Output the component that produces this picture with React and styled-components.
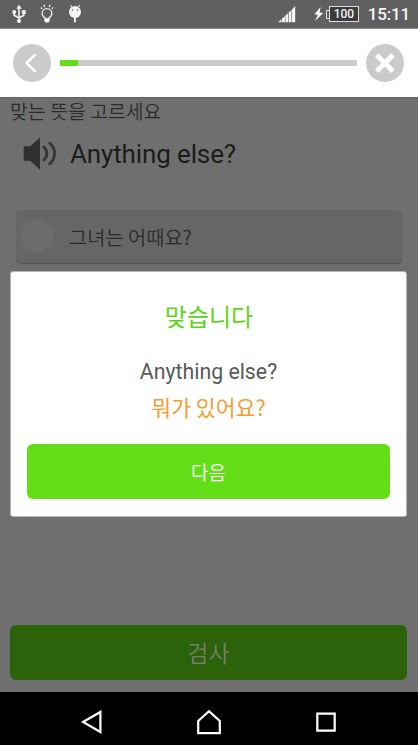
import React from "react";
import styled, { createGlobalStyle } from "styled-components";

const App = () => {
  return (
    <Phone>
      <GlobalStyle />
      <StatusBar>
        <StatusGroup>
          <svg width="14" height="20" viewBox="0 0 14 20" fill="none" stroke="#f2f2f2" strokeWidth="1.6">
            <path d="M7 3v15M2.2 7v4.2L7 14M11.8 7v4.2L7 14" />
            <path d="M7 .8l2.8 4H4.2z" fill="#f2f2f2" stroke="none" />
            <circle cx="7" cy="17" r="2.1" fill="#f2f2f2" stroke="none" />
            <circle cx="2.2" cy="8" r="2" fill="#f2f2f2" stroke="none" />
            <path d="M9.9 6.2h3.8V10H9.9z" fill="#f2f2f2" stroke="none" />
          </svg>
          <svg width="14" height="20" viewBox="0 0 14 20" fill="none" stroke="#e6e6e6" strokeWidth="1.4">
            <path d="M5 15.2v-1.6C3.3 12.8 2.2 11.3 2.2 9.4a4.8 4.8 0 0 1 9.6 0c0 1.9-1.1 3.4-2.8 4.2v1.6" />
            <path d="M4.4 14.2h5.2v2.4L8.5 18.4h-3l-1.1-1.8z" fill="#fff" stroke="none" />
            <path d="M4.7 3L4 .8M9.3 3l.7-2.2M2.1 4.8L.8 3.6M11.9 4.8l1.3-1.2" />
          </svg>
          <svg width="14" height="20" viewBox="0 0 14 20" fill="none">
            <path d="M3.6 3L2.4 1M10.4 3l1.2-2" stroke="#f5f5f5" strokeWidth="1.1" />
            <path d="M7 13v5.3" stroke="#f5f5f5" strokeWidth="1.8" />
            <circle cx="7" cy="7.9" r="6" fill="#f5f5f5" />
            <circle cx="4.4" cy="6" r=".8" fill="#606060" />
            <circle cx="9.6" cy="6" r=".8" fill="#606060" />
          </svg>
        </StatusGroup>
        <StatusGroup $right>
          <svg width="18" height="18" viewBox="0 0 18 18" fill="#f5f5f5">
            <path d="M0 17.3l3.4-3v3zM4 13.8l2.9-2.7v6.2H4zM7.4 10.6l2.7-2.4v9.1H7.4zM10.7 7.6l2.7-2.5v12.2h-2.7zM14 4.5L17.2 1v16.3H14z" />
          </svg>
          <Charge>
            <svg width="10" height="14" viewBox="0 0 10 14" fill="#f5f5f5">
              <path d="M6.6 0L.4 7.2l3.4.5L1.2 14l8-8.1-3.6-.4z" />
            </svg>
            <BatteryTip />
            <Battery>100</Battery>
          </Charge>
          <Clock>15:11</Clock>
        </StatusGroup>
      </StatusBar>

      <Header>
        <RoundButton aria-label="back">
          <svg width="38" height="38" viewBox="0 0 38 38" fill="none" stroke="#fff" strokeWidth="2.4">
            <path d="M22.7 10.2L13.6 19l9.1 9" />
          </svg>
        </RoundButton>
        <Progress>
          <Bar />
        </Progress>
        <RoundButton aria-label="close">
          <svg width="38" height="38" viewBox="0 0 38 38" fill="none" stroke="#fff" strokeWidth="5">
            <path d="M10.7 11L27 27.2M27 11L10.7 27.2" />
          </svg>
        </RoundButton>
      </Header>

      <Content>
        <Guide>맞는 뜻을 고르세요</Guide>
        <Question>
          <svg width="34" height="34" viewBox="0 0 34 34" fill="none" stroke="#363636" strokeWidth="2.8" strokeLinecap="round">
            <path d="M.7 9.3h6.6L17 .3v32.4l-9.7-9H.7z" fill="#303030" stroke="none" />
            <path d="M20.7 10c4.2 3.2 4.2 9.8 0 13" />
            <path d="M26.7 6.2c6.4 5.2 6.4 15.4 0 20.6" />
          </svg>
          <span>Anything else?</span>
        </Question>
        <Option>
          <Radio />
          <span>그녀는 어때요?</span>
        </Option>
        <CheckButton>검사</CheckButton>

        <Dialog>
          <Result>맞습니다</Result>
          <Sentence>Anything else?</Sentence>
          <Meaning>뭐가 있어요?</Meaning>
          <NextButton>다음</NextButton>
        </Dialog>
      </Content>

      <NavBar>
        <svg width="22" height="24" viewBox="0 0 22 24">
          <path d="M2 12L19.4 2v20z" />
        </svg>
        <svg width="26" height="26" viewBox="0 0 26 26">
          <path d="M2.2 24.2V12L13 2.2 23.8 12v12.2z" />
        </svg>
        <svg width="22" height="22" viewBox="0 0 22 22">
          <path d="M2.3 2.7h17.4v17H2.3z" />
        </svg>
      </NavBar>
    </Phone>
  );
};

export default App;

const GlobalStyle = createGlobalStyle`
  * {
    box-sizing: border-box;
  }

  body {
    margin: 0;
    background: #000;
  }

  button {
    padding: 0;
    border: none;
    font-family: inherit;
  }

  svg {
    display: block;
    flex-shrink: 0;
  }
`;

const Phone = styled.div`
  display: flex;
  flex-direction: column;
  width: 418px;
  height: 745px;
  overflow: hidden;
  font-family: Roboto, "Noto Sans CJK KR", sans-serif;
`;

const StatusBar = styled.div`
  display: flex;
  justify-content: space-between;
  height: 28px;
  padding: 0 8px 0 12px;
  background: #606060;
`;

const StatusGroup = styled.div`
  display: flex;
  align-items: center;
  gap: ${(props) => (props.$right ? "0" : "14px")};
`;

const Charge = styled.div`
  display: flex;
  align-items: center;
  margin: 0 9px 0 18px;
`;

const BatteryTip = styled.div`
  width: 3px;
  height: 9px;
  margin-left: 2px;
  border: 1px solid #ddd;
  border-right: none;
`;

const Battery = styled.div`
  width: 30px;
  height: 16px;
  border: 1px solid #ddd;
  background: #3c3c3c;
  color: #f5f5f5;
  font-size: 12px;
  font-weight: 500;
  line-height: 15px;
  text-align: center;
`;

const Clock = styled.div`
  color: #f5f5f5;
  font-size: 17px;
  font-weight: 500;
  line-height: 28px;
  letter-spacing: -0.2px;
`;

const Header = styled.div`
  display: flex;
  align-items: center;
  justify-content: space-between;
  height: 69px;
  padding: 0 14px 0 13px;
  background: #fff;
  border-top: 1px solid #8a8a8a;
`;

const RoundButton = styled.button`
  width: 38px;
  height: 38px;
  border-radius: 50%;
  background: #cbcbcb;
`;

const Progress = styled.div`
  width: 297px;
  height: 6px;
  background: #cbcbcb;
`;

const Bar = styled.div`
  width: 18px;
  height: 100%;
  background: #64df17;
`;

const Content = styled.div`
  position: relative;
  display: flex;
  flex-direction: column;
  height: 595px;
  padding: 0 11px 12px 10px;
  background: #6f6f6f;
  border-top: 1px solid #626262;
`;

const Guide = styled.div`
  height: 28px;
  color: #2b2b2b;
  font-size: 19.3px;
  font-weight: 350;
  line-height: 30px;
`;

const Question = styled.div`
  display: flex;
  align-items: center;
  gap: 13px;
  height: 56px;
  padding-left: 13px;
  color: #1c1c1c;
  font-size: 26px;
  letter-spacing: -0.13px;
`;

const Option = styled.div`
  display: flex;
  align-items: center;
  gap: 16px;
  width: 386px;
  height: 53px;
  margin: 28px 0 0 6px;
  padding-left: 5px;
  border-radius: 5px;
  background: #666;
  box-shadow: 0 1px 1px #505050;
  color: #2b2b2b;
  font-family: "Noto Sans CJK KR", sans-serif;
  font-size: 19.8px;
  font-weight: 350;
`;

const Radio = styled.div`
  width: 32px;
  height: 32px;
  margin-top: -2px;
  border-radius: 50%;
  background: #6d6d6d;
`;

const CheckButton = styled.button`
  height: 55px;
  margin-top: auto;
  padding-bottom: 2px;
  border-radius: 6px;
  background: #2c620a;
  color: #72806a;
  font-size: 23px;
  font-weight: 350;
`;

const Dialog = styled.div`
  position: absolute;
  top: 173px;
  left: 10px;
  display: flex;
  flex-direction: column;
  align-items: center;
  width: 397px;
  height: 246px;
  padding: 28px 16px 17px;
  border: 1px solid #b5b5b5;
  border-radius: 3px;
  background: #fff;
`;

const Result = styled.div`
  height: 36px;
  padding-left: 1px;
  color: #5bd516;
  font-size: 24px;
  line-height: 36px;
`;

const Sentence = styled.div`
  height: 36px;
  margin-top: 18px;
  color: #5a5a5a;
  font-size: 21.3px;
  line-height: 36px;
`;

const Meaning = styled.div`
  height: 36px;
  color: #f79c32;
  font-family: "Noto Sans CJK KR", sans-serif;
  font-size: 21.6px;
  line-height: 33px;
`;

const NextButton = styled.button`
  width: 363px;
  height: 55px;
  margin-top: auto;
  border-radius: 6px;
  background: #64df17;
  color: #fff;
  font-size: 19px;
  font-weight: 350;
`;

const NavBar = styled.div`
  display: flex;
  align-items: center;
  justify-content: center;
  gap: 93px;
  height: 53px;
  padding-top: 7px;
  background: #000;

  svg {
    fill: none;
    stroke: #fff;
    stroke-width: 2.2;
  }
`;
